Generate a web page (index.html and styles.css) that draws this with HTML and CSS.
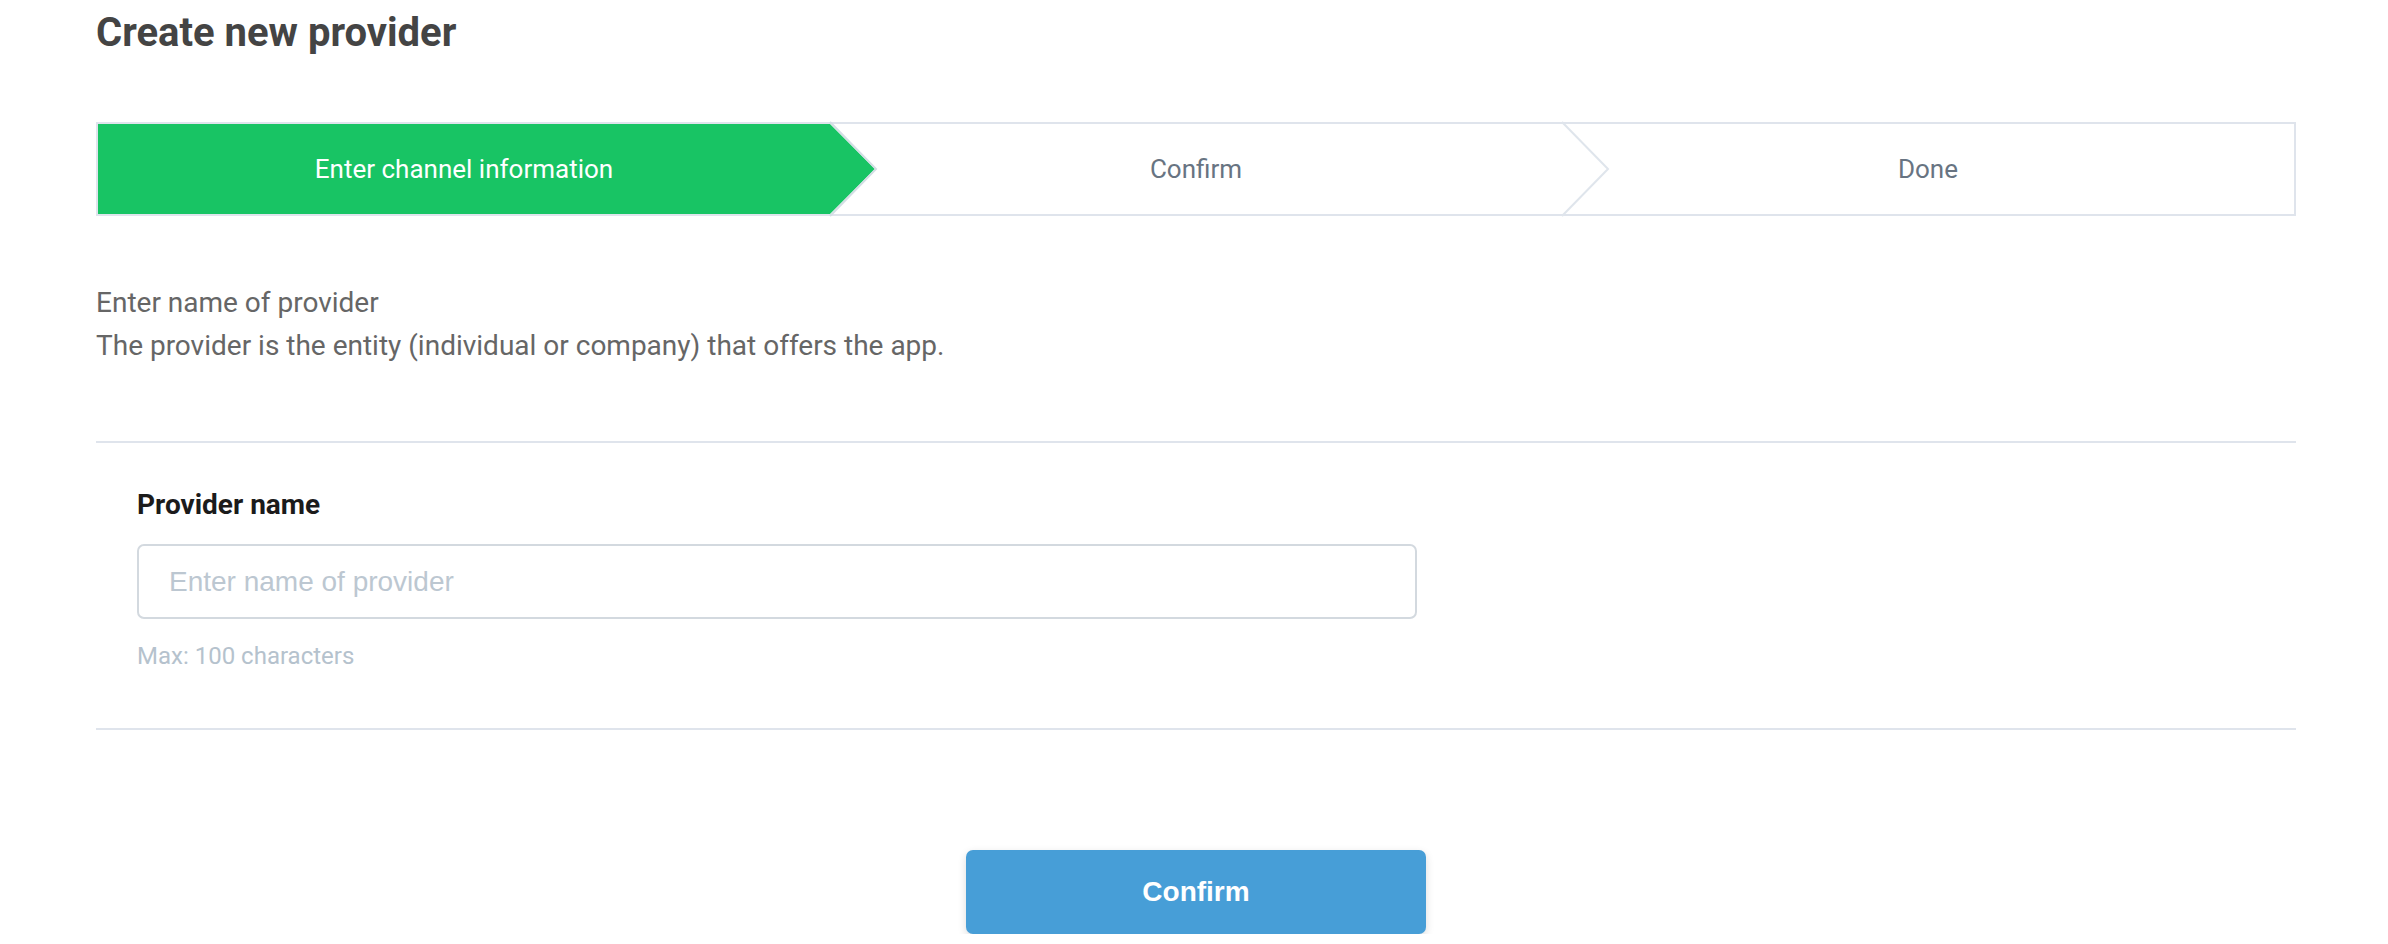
FILE: index.html
```html
<!DOCTYPE html>
<html lang="en">
<head>
<meta charset="utf-8">
<title>Create new provider</title>
<link rel="stylesheet" href="styles.css">
</head>
<body>
<main class="page">
  <h1 class="title">Create new provider</h1>

  <div class="stepper">
    <div class="step active">
      <span>Enter channel information</span>
      <svg class="arrow" viewBox="0 0 48 94" width="48" height="94">
        <polygon points="0,2 45,47 0,92" fill="#18c464"/>
        <polyline points="0,0 46,47 0,94" fill="none" stroke="#d3dde4" stroke-width="2"/>
      </svg>
    </div>
    <div class="step">
      <span>Confirm</span>
      <svg class="arrow" viewBox="0 0 48 94" width="48" height="94">
        <polygon points="0,2 45,47 0,92" fill="#ffffff"/>
        <polyline points="0,0 46,47 0,94" fill="none" stroke="#dfe5ec" stroke-width="2"/>
      </svg>
    </div>
    <div class="step">
      <span>Done</span>
    </div>
  </div>

  <div class="intro">
    <p>Enter name of provider</p>
    <p>The provider is the entity (individual or company) that offers the app.</p>
  </div>

  <section class="form-section">
    <label class="field-label" for="provider-name">Provider name</label>
    <input class="field-input" id="provider-name" type="text" placeholder="Enter name of provider">
    <p class="field-help">Max: 100 characters</p>
  </section>

  <div class="actions">
    <button class="btn-primary" type="button">Confirm</button>
  </div>
</main>
</body>
</html>
```

FILE: styles.css
```css
* {
  box-sizing: border-box;
}

html, body {
  margin: 0;
  padding: 0;
  background: #ffffff;
}

body {
  font-family: Roboto, "Liberation Sans", sans-serif;
}

.page {
  width: 2200px;
  margin-left: 96px;
}

.title {
  margin: 9px 0 0;
  font-size: 40px;
  line-height: 48px;
  font-weight: 700;
  color: #444444;
}

.stepper {
  display: flex;
  margin-top: 65px;
  height: 94px;
  border: 2px solid #dfe4ec;
}

.step {
  flex: 1;
  position: relative;
  display: flex;
  align-items: center;
  justify-content: center;
  font-size: 26px;
  color: #687482;
}

.step.active {
  background: #18c464;
  color: #ffffff;
}

.step span {
  position: relative;
  z-index: 2;
}

.arrow {
  position: absolute;
  left: 100%;
  top: -2px;
  width: 48px;
  height: 94px;
  overflow: visible;
  z-index: 1;
}

.intro {
  margin-top: 65px;
}

.intro p {
  margin: 0;
  font-size: 28px;
  line-height: 43px;
  color: #666666;
}

.form-section {
  margin-top: 74px;
  border-top: 2px solid #dfe4ec;
  border-bottom: 2px solid #dfe4ec;
  padding: 41px 41px 54px;
  display: flex;
  flex-direction: column;
  align-items: flex-start;
}

.field-label {
  font-size: 28px;
  line-height: 42px;
  font-weight: 700;
  color: #1b1b1b;
}

.field-input {
  margin-top: 18px;
  width: 1280px;
  height: 75px;
  border: 2px solid #d3d9df;
  border-radius: 7px;
  padding: 0 30px;
  font-family: "Liberation Sans", Arial, sans-serif;
  font-size: 28px;
  color: #333333;
  background: #ffffff;
  outline: none;
}

.field-input::placeholder {
  color: #bcc7d1;
}

.field-help {
  margin: 19px 0 0;
  font-size: 24px;
  line-height: 36px;
  color: #b5c2cd;
}

.actions {
  display: flex;
  justify-content: center;
  padding-top: 120px;
}

.btn-primary {
  width: 460px;
  height: 84px;
  border: none;
  border-radius: 7px;
  background: #479ed7;
  color: #ffffff;
  font-family: "Liberation Sans", Arial, sans-serif;
  font-size: 28px;
  font-weight: 700;
  box-shadow: 0 3px 8px rgba(0, 0, 0, 0.14);
  cursor: pointer;
}
```
